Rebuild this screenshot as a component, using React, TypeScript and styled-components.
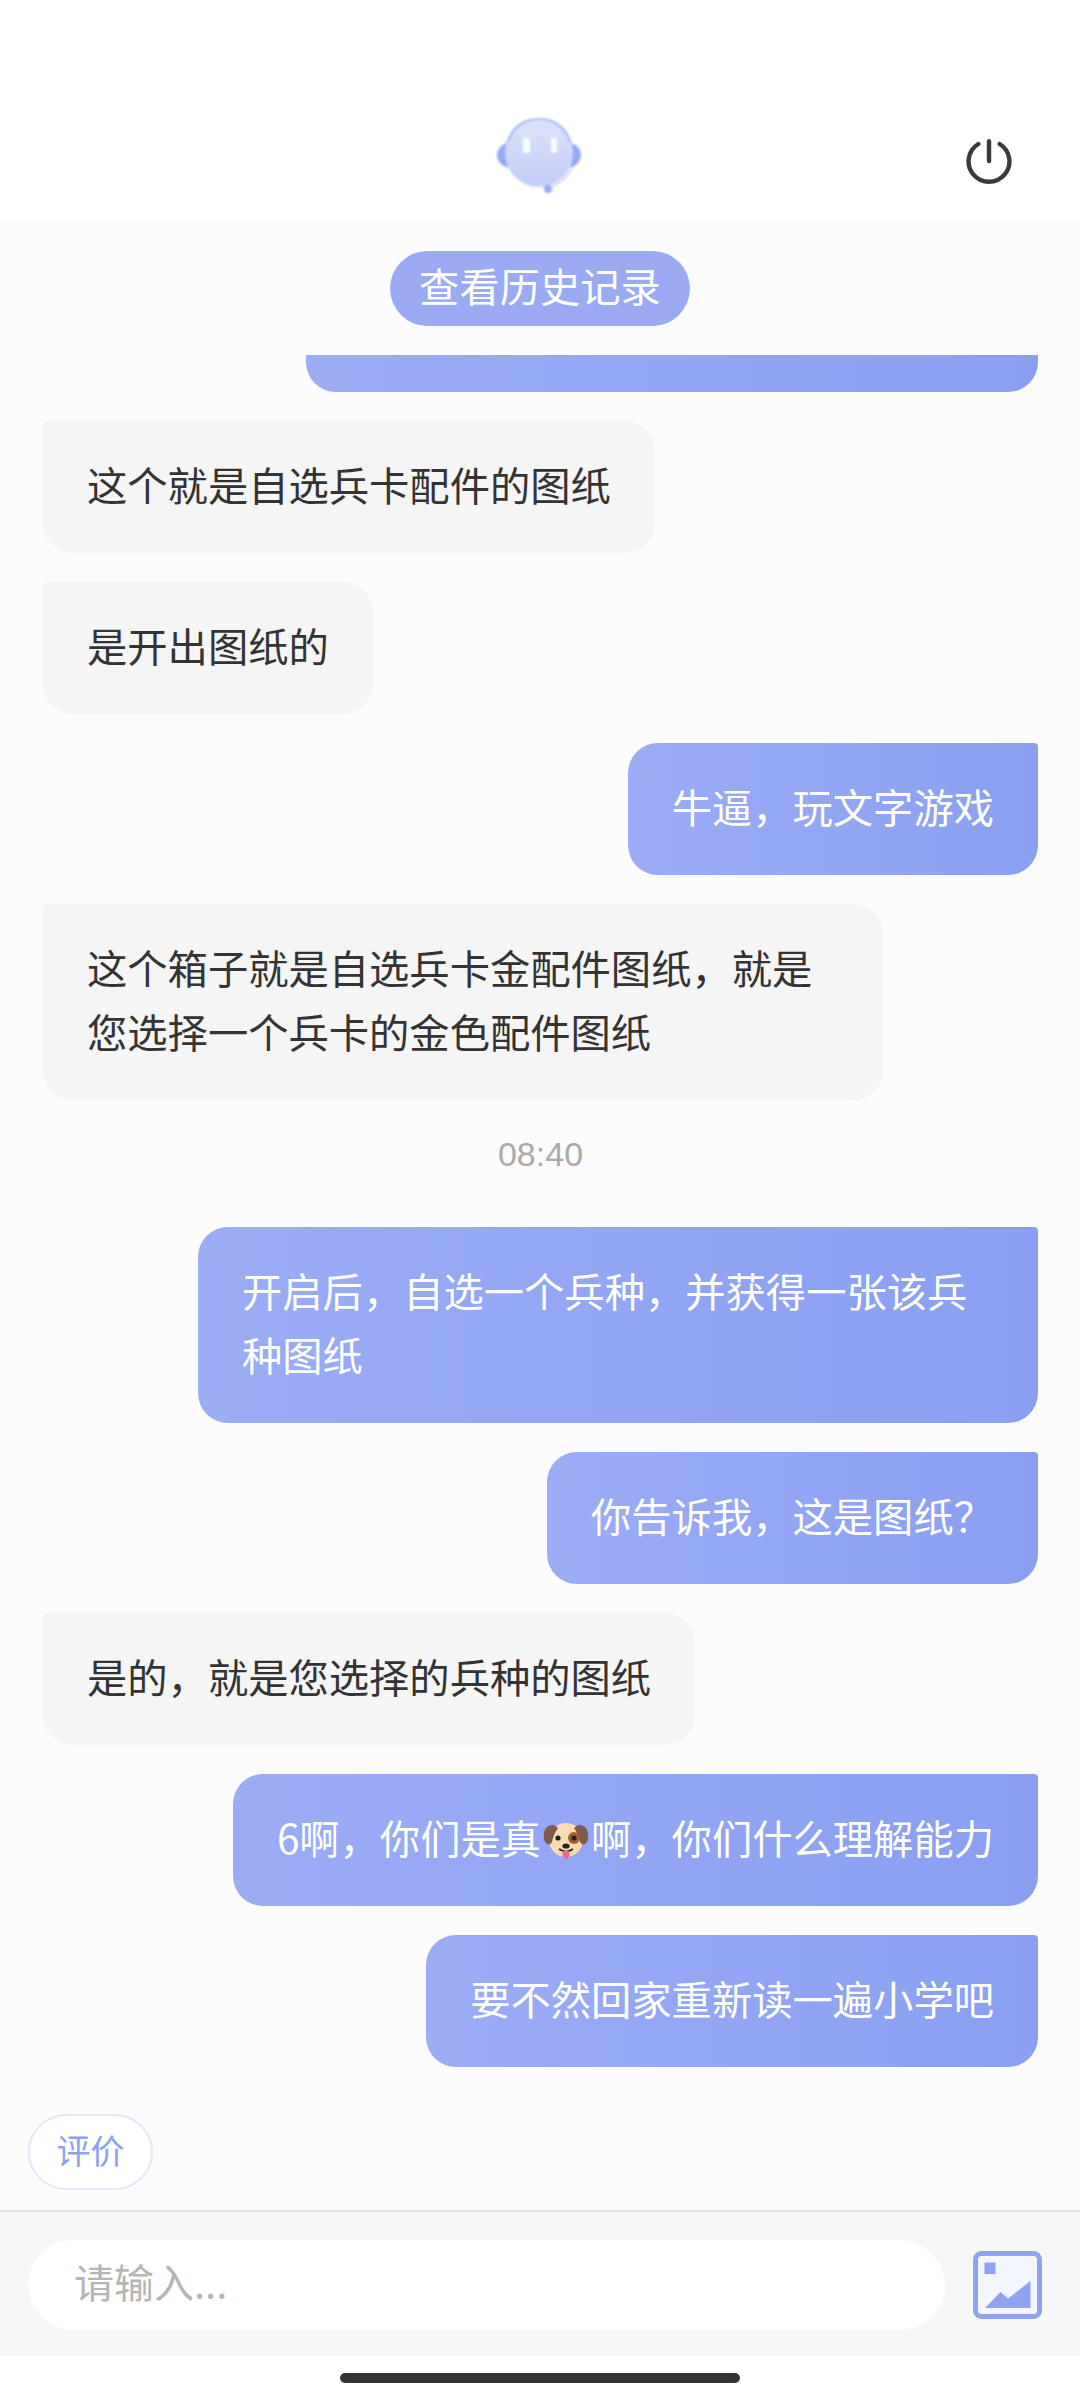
import React from 'react';
import styled, {createGlobalStyle} from 'styled-components';

const CJK = `"Noto Sans CJK SC", "Noto Sans", sans-serif`;

const GlobalStyle = createGlobalStyle`
  html, body {
    margin: 0;
    padding: 0;
    background: #fff;
    font-family: ${CJK};
  }
`;

const Page = styled.div`
  width: 1080px;
  height: 2400px;
  display: flex;
  flex-direction: column;
  overflow: hidden;
  background: #fff;
`;

const Header = styled.header`
  height: 221px;
  flex: none;
  box-sizing: border-box;
  padding: 117px 68px 0 497px;
  display: flex;
  justify-content: space-between;
  align-items: flex-start;
  background: #fff;
`;

const AvatarSvg = styled.svg`
  filter: blur(1px);
`;

const PowerSvg = styled.svg`
  margin-top: 22px;
`;

const Body = styled.main`
  flex: 1;
  min-height: 0;
  display: flex;
  flex-direction: column;
  align-items: center;
  background: #fcfcfc;
  padding-top: 30px;
`;

const HistoryPill = styled.button`
  flex: none;
  width: 300px;
  height: 75px;
  margin: 0 0 29px;
  padding: 0 0 8px;
  border: 0;
  border-radius: 38px;
  background: #9aabf3;
  color: #fff;
  font: 400 40.3px/67px ${CJK};
`;

const MessageList = styled.div`
  flex: 1;
  min-height: 0;
  align-self: stretch;
  overflow: hidden;
  display: flex;
  flex-direction: column;
  justify-content: flex-end;
  gap: 29px;
  padding: 0 42px 0 43px;
`;

const Bubble = styled.div<{$mine?: boolean}>`
  flex: none;
  box-sizing: border-box;
  max-width: 840px;
  padding: 31px 44px 37px;
  font-size: 40.3px;
  line-height: 64px;
  align-self: ${p => (p.$mine ? 'flex-end' : 'flex-start')};
  color: ${p => (p.$mine ? '#fff' : '#333')};
  background: ${p =>
    p.$mine ? 'linear-gradient(90deg, #9cadf6, #8a9ff2)' : '#f5f5f5'};
  border-radius: ${p => (p.$mine ? '30px 4px 30px 30px' : '4px 30px 30px 30px')};
`;

const ClippedBubble = styled(Bubble)`
  width: 732px;
  height: 132px;
`;

const TimeStamp = styled.div`
  flex: none;
  align-self: center;
  font: 400 34px/40px "Liberation Sans", Arial, sans-serif;
  color: #aaa;
  margin: 5px 0 24px;
`;

const DogIcon = styled.svg`
  width: 46px;
  height: 46px;
  vertical-align: -8px;
  margin: 0 2px;
`;

const RatingRow = styled.div`
  flex: none;
  align-self: stretch;
  padding: 47px 0 20px 28px;
`;

const RatingButton = styled.button`
  display: block;
  box-sizing: border-box;
  width: 125px;
  height: 76px;
  padding: 0 0 4px;
  border: 2px solid #e2e7fb;
  border-radius: 38px;
  background: #fff;
  color: #8ea2f2;
  font: 400 34px/62px ${CJK};
`;

const Footer = styled.footer`
  flex: none;
  height: 146px;
  box-sizing: border-box;
  border-top: 2px solid #e2e2e2;
  background: #f7f7f8;
  display: flex;
  align-items: center;
  padding: 2px 38px 0 28px;
  gap: 28px;
`;

const InputBox = styled.div`
  flex: 1;
  height: 90px;
  border-radius: 45px;
  background: #fff;
  box-sizing: border-box;
  padding-left: 46px;
  font-size: 40px;
  line-height: 82px;
  color: #b5b5b5;
`;

const HomeBar = styled.div`
  flex: none;
  height: 44px;
  background: #fff;
  display: flex;
  justify-content: center;
  padding-top: 17px;
  box-sizing: border-box;

  &::after {
    content: '';
    width: 400px;
    height: 10px;
    border-radius: 5px;
    background: #333;
  }
`;

const Avatar = () => (
  <AvatarSvg width="84" height="76" viewBox="0 0 84 76">
    <defs>
      <linearGradient id="face" x1="0" y1="0" x2="0" y2="1">
        <stop offset="0" stopColor="#dde3fb" />
        <stop offset="1" stopColor="#c2cdf8" />
      </linearGradient>
    </defs>
    <path d="M9 26 C3 29 0 33 0 38 C0 43 3 48 11 51 Z" fill="#98a9f2" />
    <path d="M75 26 C81 29 84 33 84 38 C84 43 81 48 73 51 Z" fill="#98a9f2" />
    <circle cx="42" cy="36" r="34" fill="url(#face)" />
    <path d="M10 26 C16 9 28 2 42 2 C56 2 68 9 74 26" fill="none" stroke="#a5b4f4" strokeWidth="2" />
    <rect x="26" y="21" width="7" height="15" rx="1.5" fill="#fff" opacity=".9" />
    <rect x="54" y="21" width="6" height="15" rx="1.5" fill="#fff" opacity=".9" />
    <path d="M75 50 C71 60 62 68 52 70" fill="none" stroke="#fff" strokeWidth="3" />
    <path d="M75 50 C71 60 62 68 52 70" fill="none" stroke="#b4c0f6" strokeWidth="1.2" />
    <circle cx="51" cy="72" r="4" fill="#98a9f2" />
  </AvatarSvg>
);

const PowerIcon = () => (
  <PowerSvg width="46" height="46" viewBox="0 0 46 46" fill="none" stroke="#3a3a3a" strokeWidth="4.4" strokeLinecap="round">
    <path d="M12.3 5 A20.4 20.4 0 1 0 33.7 5" />
    <path d="M23 2.2 V22" />
  </PowerSvg>
);

const ImageIcon = () => (
  <svg width="69" height="68" viewBox="0 0 69 68">
    <rect x="2.5" y="2.5" width="64" height="63" rx="6" fill="#f4f6fe" stroke="#8fa3f2" strokeWidth="5" />
    <rect x="11.5" y="11.5" width="11" height="11.5" fill="#8fa3f2" />
    <path d="M12 57 L27.5 41 L35 47.6 L57.5 30 V57 Z" fill="#8fa3f2" />
  </svg>
);

const Dog = () => (
  <DogIcon viewBox="0 0 46 46">
    <circle cx="23" cy="24" r="17" fill="#fbdcb0" />
    <path d="M11 9 C3 8 0 15 1 23 C2 29 7 30 9 26 C10 21 12 16 15 12 Z" fill="#7f5b4d" />
    <path d="M35 9 C43 8 46 15 45 23 C44 29 39 30 37 26 C36 21 34 16 31 12 Z" fill="#7f5b4d" />
    <circle cx="31" cy="22" r="6" fill="#a5602f" />
    <circle cx="15" cy="22" r="2.6" fill="#222" />
    <circle cx="31" cy="22" r="2.6" fill="#222" />
    <ellipse cx="23" cy="30" rx="3.6" ry="2.6" fill="#222" />
    <path d="M16 33 Q23 38 30 33" fill="none" stroke="#222" strokeWidth="1.6" />
    <path d="M19.5 35 H26.5 V39 A3.5 3.5 0 0 1 19.5 39 Z" fill="#e66a8f" />
  </DogIcon>
);

export default function App() {
  return (
    <Page>
      <GlobalStyle />
      <Header>
        <Avatar />
        <PowerIcon />
      </Header>
      <Body>
        <HistoryPill>查看历史记录</HistoryPill>
        <MessageList>
          <ClippedBubble $mine />
          <Bubble>这个就是自选兵卡配件的图纸</Bubble>
          <Bubble>是开出图纸的</Bubble>
          <Bubble $mine>牛逼，玩文字游戏</Bubble>
          <Bubble>这个箱子就是自选兵卡金配件图纸，就是您选择一个兵卡的金色配件图纸</Bubble>
          <TimeStamp>08:40</TimeStamp>
          <Bubble $mine>开启后，自选一个兵种，并获得一张该兵种图纸</Bubble>
          <Bubble $mine>你告诉我，这是图纸？</Bubble>
          <Bubble>是的，就是您选择的兵种的图纸</Bubble>
          <Bubble $mine>
            6啊，你们是真
            <Dog />
            啊，你们什么理解能力
          </Bubble>
          <Bubble $mine>要不然回家重新读一遍小学吧</Bubble>
        </MessageList>
        <RatingRow>
          <RatingButton>评价</RatingButton>
        </RatingRow>
      </Body>
      <Footer>
        <InputBox>请输入...</InputBox>
        <ImageIcon />
      </Footer>
      <HomeBar />
    </Page>
  );
}
